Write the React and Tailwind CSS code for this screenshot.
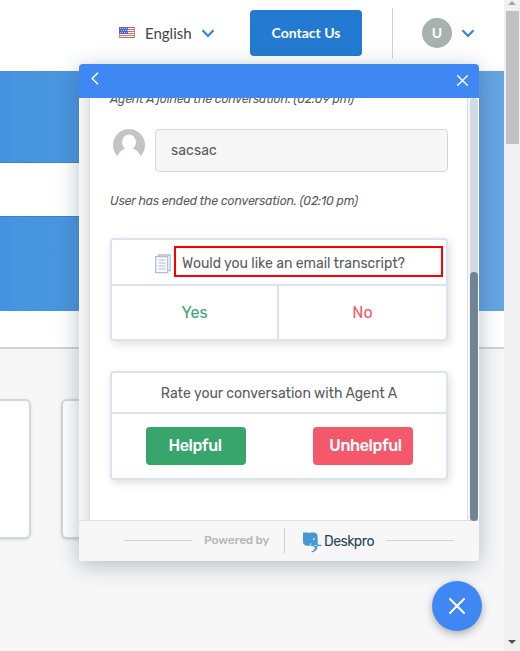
import React from "react";

function Chevron() {
  return (
    <svg width="14" height="9" viewBox="0 0 14 9" fill="none" stroke="#3287df" strokeWidth="2.2">
      <path d="M1.5 1.2 7 6.9l5.5-5.7" />
    </svg>
  );
}

function Flag() {
  return (
    <svg width="16" height="11" viewBox="0 0 16 11" shapeRendering="crispEdges">
      <rect width="16" height="11" fill="#fff" />
      <path d="M0 .5h16M0 2.5h16M0 4.5h16M0 6.5h16M0 8.5h16M0 10.5h16" stroke="#e8685c" />
      <rect width="9" height="7" fill="#3f66d8" />
      <path d="M1 1.5h8M2 3.5h7M1 5.5h8" stroke="#b9cbff" strokeDasharray="1 1" />
      <rect x=".5" y=".5" width="15" height="10" fill="none" stroke="#a85845" strokeOpacity=".45" />
    </svg>
  );
}

function Cross({ size, strokeWidth }) {
  return (
    <svg width={size} height={size} viewBox="0 0 16 16" fill="none" stroke="#fff" strokeWidth={strokeWidth} strokeLinecap="round">
      <path d="m1 1 14 14M15 1 1 15" />
    </svg>
  );
}

function Person() {
  return (
    <svg width="32" height="32" viewBox="0 0 32 32" className="shrink-0">
      <defs>
        <clipPath id="face">
          <circle cx="16" cy="16" r="16" />
        </clipPath>
      </defs>
      <g clipPath="url(#face)">
        <rect width="32" height="32" fill="#c4c4c4" />
        <ellipse cx="16" cy="13.2" rx="7" ry="7.7" fill="#fff" />
        <path d="M3.500 32c.5-5 3-11 9-12.500h7c6 1.500 8.500 7.500 9 12.500z" fill="#fff" />
        <path d="M0 27h32v5H0z" fill="#fff" />
      </g>
    </svg>
  );
}

function Pages() {
  return (
    <svg width="16" height="20" viewBox="0 0 16 20" fill="none" stroke="#afc0cd">
      <path d="M3.500 2.500V1h11.700v15.500h-2" strokeWidth="1.300" />
      <path d="M.7 2.700h12v16H.7z" fill="#f8fbfc" strokeWidth="1.300" />
      <path d="M3.500 6h7M3.500 9h7M3.500 12h7M3.500 15h7" strokeWidth="1.200" />
    </svg>
  );
}

function Elephant() {
  return (
    <svg width="19" height="21" viewBox="0 0 19 21">
      <path d="M0 .6h4.500l1.500.5L7.500.4H11c2.700.3 3.700 2 3.700 4.800v6.600c0 .7.400 1 1.300 1h2.500v1.300h-4c0 3.500-2 5.700-5.600 6.300l-.4-1.200c2.300-.6 3.400-2 3.400-4.300l-4.500-1.300c-2.600.5-5.200.1-6.500-1.100C.2 11.600 0 10.200 0 8.200z" fill="#4299d6" />
      <circle cx="10.800" cy="7.200" r=".9" fill="#fff" />
      <path d="M7.300 13c0-.9.300-1.500 1-2" fill="none" stroke="#d2e9f6" strokeWidth=".9" />
      <path d="M11 13.400h3" stroke="#d2e9f6" strokeWidth=".8" />
    </svg>
  );
}

function SitePage() {
  return (
    <main className="flex h-full w-[504px] shrink-0 flex-col overflow-hidden bg-[#f7f7f7]">
      <header className="flex h-[71px] shrink-0 items-center bg-white pb-[5px] pl-[119px] font-['Lato','Liberation_Sans',sans-serif]">
        <span className="mb-px"><Flag /></span>
        <span className="ml-[10px] w-[47px] whitespace-nowrap text-[15px] text-[#404648]">English</span>
        <span className="ml-[9px]"><Chevron /></span>
        <button className="ml-[35px] h-[46px] w-28 rounded bg-[#247ad0] text-sm font-bold text-white">Contact Us</button>
        <div className="ml-[30px] h-[50px] w-px bg-[#cfd3d4]" />
        <div className="ml-[29px] flex size-[30px] items-center justify-center rounded-full bg-[#a7b1b0] text-sm font-bold text-white">U</div>
        <span className="ml-[9px]"><Chevron /></span>
      </header>
      <section className="h-60 shrink-0 bg-linear-to-r from-[#4593df] to-[#65a5e4] pt-[91px]">
        <div className="h-[55px] w-[300px] border-y border-[#3d82cb] bg-white" />
      </section>
      <div className="h-[38px] shrink-0 border-b-2 border-[#cfd3d3] bg-white" />
      <section className="flex gap-[30px] pt-[50px]">
        <div className="h-[140px] w-[31px] rounded-r-md border-2 border-l-0 border-[#d2d7d7] bg-white shadow" />
        <div className="h-[140px] w-[300px] rounded-md border-2 border-[#d2d7d7] bg-white shadow" />
      </section>
    </main>
  );
}

function PageScrollbar() {
  return (
    <aside className="flex w-4 flex-col items-center bg-[#f0f0f0]">
      <svg width="8" height="11" viewBox="0 0 8 11"><path d="m0 5 4-4 4 4z" fill="#a3a3a3" /></svg>
      <div className="ml-px h-[133px] w-[13px] bg-[#c1c1c1]" />
      <svg className="mt-auto" width="8" height="12" viewBox="0 0 8 12"><path d="M0 1h8L4 5z" fill="#505050" /></svg>
    </aside>
  );
}

function TranscriptCard() {
  return (
    <section className="mt-[29px] flex h-[103px] w-[338px] flex-col rounded border-2 border-[#dbe4ec] bg-white shadow-[2px_3px_8px_rgba(0,0,0,0.13)]">
      <div className="flex h-[44px] items-start pl-[43px] pt-[6px]">
        <div className="mt-[8px]"><Pages /></div>
        <div className="ml-[3px] flex h-[31px] w-[269px] items-center whitespace-nowrap border-2 border-[#fa0000] pl-[6px] pt-[3px] text-[14px] tracking-[-0.02px]">Would you like an email transcript?</div>
      </div>
      <div className="grid flex-1 grid-cols-2 border-t-2 border-[#dbe4ec] text-base">
        <button className="border-r-2 border-[#dbe4ec] text-[#38a56d]">Yes</button>
        <button className="text-[#f4596b]">No</button>
      </div>
    </section>
  );
}

function RatingCard() {
  return (
    <section className="mt-[30px] h-[109px] w-[338px] rounded border-2 border-[#dbe4ec] bg-white shadow-[2px_3px_8px_rgba(0,0,0,0.13)]">
      <div className="flex h-[41px] items-center justify-center whitespace-nowrap border-b-2 border-[#dbe4ec] pt-[2px] text-[14px] tracking-[-0.02px]">Rate your conversation with Agent A</div>
      <div className="flex justify-between pl-[34px] pr-[33px] pt-[13px] text-base font-medium tracking-[-0.35px] text-white">
        <button className="h-[38px] w-[100px] rounded bg-[#38a56d] pr-[2px]">Helpful</button>
        <button className="h-[38px] w-[100px] rounded bg-[#f4596b] pl-[5px]">Unhelpful</button>
      </div>
    </section>
  );
}

function ChatWindow() {
  return (
    <div className="absolute left-[79px] top-16 flex h-[497px] w-[400px] flex-col overflow-hidden rounded bg-[#f7f7f7] font-['Rubik','Roboto','Liberation_Sans',sans-serif] text-[#595c5c]">
      <header className="flex h-[34px] shrink-0 items-center justify-between bg-[#3f88f4] pl-3 pr-[11px]">
        <svg className="mb-[6px]" width="8" height="13" viewBox="0 0 8 13" fill="none" stroke="#fff" strokeWidth="1.500"><path d="M7 .8 1.200 6.500 7 12.200" /></svg>
        <div className="mb-[2px]"><Cross size={11} strokeWidth={2.1} /></div>
      </header>
      <div className="flex h-[423px] shrink-0">
        <div className="h-[422px] w-[10px] bg-linear-to-r from-[#f7f7f7] to-[#e5e5e5]" />
        <div className="h-[422px] w-[379px] overflow-hidden border-x border-x-[#d9dddf] bg-white pl-5">
          <p className="-mt-[7px] h-4 whitespace-nowrap text-[12.25px] italic leading-4 tracking-[-0.14px]">Agent A joined the conversation. (02:09 pm)</p>
          <div className="mt-[22px] flex gap-[10px] pl-[3px]">
            <Person />
            <div className="h-[43px] w-[293px] rounded border border-[#d5d7d7] bg-[#f6f6f6] px-[15px] text-[14px] leading-[41px] tracking-[0.1px]">sacsac</div>
          </div>
          <p className="mt-[21px] h-4 whitespace-nowrap text-[12.25px] italic leading-4 tracking-[-0.14px]">User has ended the conversation. (02:10 pm)</p>
          <TranscriptCard />
          <RatingCard />
        </div>
        <div className="relative z-10 ml-[2px] flex w-2 flex-col rounded-t bg-[#d2dae0] pt-[174px]">
          <div className="flex-1 rounded bg-[#708494]" />
        </div>
        <div className="w-px bg-white" />
      </div>
      <footer className="-mt-px flex flex-1 items-center border-t border-[#dcdfdf] pb-[2px] pl-[45px]">
        <div className="h-px w-[68px] bg-[#cfd4d4]" />
        <span className="ml-3 w-[65px] whitespace-nowrap text-[12px] font-medium tracking-[-0.22px] text-[#b3b9b8]">Powered by</span>
        <div className="ml-[15px] h-[25px] w-px bg-[#cdd2d2]" />
        <div className="ml-[18px] mt-1"><Elephant /></div>
        <span className="ml-[2px] mt-[3px] w-[51px] whitespace-nowrap text-[14px] tracking-[-0.5px] text-[#264459]">Deskpro</span>
        <div className="ml-[11px] h-px w-[68px] bg-[#cfd4d4]" />
      </footer>
    </div>
  );
}

export default function App() {
  return (
    <div className="relative flex h-[651px] w-[520px] overflow-hidden">
      <SitePage />
      <div className="absolute left-[79px] top-16 h-[497px] w-[400px] rounded shadow-[0_4px_22px_rgba(35,65,85,0.33)]" />
      <ChatWindow />
      <button className="absolute left-[432px] top-[581px] flex size-[50px] items-center justify-center rounded-full bg-[#3f88f4] shadow-[0_3px_8px_rgba(0,0,0,0.3)]">
        <Cross size={16} strokeWidth={2} />
      </button>
      <PageScrollbar />
    </div>
  );
}
